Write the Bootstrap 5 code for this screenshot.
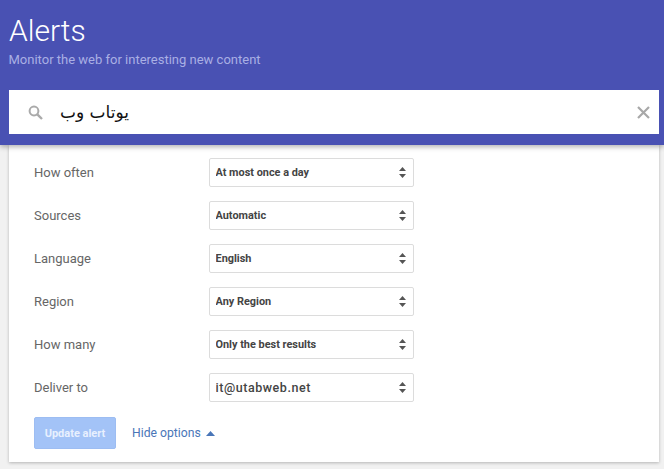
<!doctype html>
<html lang="en"><head><meta charset="utf-8"><title>Alerts</title>
<link href="https://cdn.jsdelivr.net/npm/bootstrap@5.3.0/dist/css/bootstrap.min.css" rel="stylesheet">
<style>
html,body{height:469px;overflow:hidden}
body{background:#f1f1f1;font-family:Roboto,"Liberation Sans",sans-serif;color:#666}
.hero{background:#4951b3;height:145px;padding:13px 5px 11px 9px;box-shadow:0 2px 5px rgba(0,0,0,.3);position:relative;z-index:2}
.hero-title{font-weight:300;font-size:30px;line-height:36px;color:#fff;margin:0}
.hero-sub{font-size:13px;line-height:16px;color:#a9afe4;margin:3px 0 22px -.5px}
.searchbar{background:#fff;height:44px;padding:0 9px 0 19px}
.ar-text{font-family:"DejaVu Sans",sans-serif;font-size:17px;color:#111;margin-left:17px;line-height:1}
.panel{background:#fff;margin:0 5px 0 9px;height:317px;padding:13px 25px 0;box-shadow:0 1px 3px rgba(0,0,0,.25)}
.opt-row{height:29px;margin-bottom:14px}
.opt-label{width:175px;font-size:13px;color:#666}
.opt-select.form-select{width:205px;height:29px;padding:2px 24px 0 5.500px;font-size:10.9px;font-weight:700;color:#444;border:1px solid #dcdcdc;border-radius:2px;background-position:right 6px center;background-size:9px 13px;box-shadow:none;font-family:Roboto,sans-serif;background-image:url("data:image/svg+xml,%3Csvg xmlns='http://www.w3.org/2000/svg' viewBox='0 0 9 13'%3E%3Cpath fill='%23555' d='M4.5 1 8 5H1zM1 8h7l-3.500 4z'/%3E%3C/svg%3E")}
.opt-select.mail{font-size:12.5px;letter-spacing:.55px;font-weight:500;padding-top:1px}
.btn-update.btn{background:#a3c3f7;border:1px solid #9dbdf2;color:#e8f0fe;font-size:11px;font-weight:700;width:82px;height:32px;padding:2px 0 0;border-radius:2px;opacity:1}
.hide-link{font-size:12.2px;color:#4a76b8;text-decoration:none;margin-left:16px;padding-top:1px;gap:5px}
.footer-row{margin-top:15px}
</style></head>
<body>
<header class="hero">
  <h1 class="hero-title">Alerts</h1>
  <p class="hero-sub">Monitor the web for interesting new content</p>
  <div class="searchbar d-flex align-items-center">
    <svg width="15" height="15" viewBox="0 0 15 15" fill="none" stroke="#aaa" stroke-width="2"><circle cx="6" cy="6" r="4.4"/><path d="M9.3 9.3 14 14" stroke-width="2.4"/></svg>
    <span class="ar-text" lang="fa" dir="rtl">یوتاب وب</span>
    <svg class="ms-auto" width="13" height="13" viewBox="0 0 13 13" stroke="#a8a8a8" stroke-width="2.2"><path d="M1 1 12 12M12 1 1 12"/></svg>
  </div>
</header>
<main class="panel">
  <div class="opt-row d-flex align-items-center"><label class="opt-label">How often</label><select class="form-select opt-select"><option>At most once a day</option></select></div>
  <div class="opt-row d-flex align-items-center"><label class="opt-label">Sources</label><select class="form-select opt-select"><option>Automatic</option></select></div>
  <div class="opt-row d-flex align-items-center"><label class="opt-label">Language</label><select class="form-select opt-select"><option>English</option></select></div>
  <div class="opt-row d-flex align-items-center"><label class="opt-label">Region</label><select class="form-select opt-select"><option>Any Region</option></select></div>
  <div class="opt-row d-flex align-items-center"><label class="opt-label">How many</label><select class="form-select opt-select"><option>Only the best results</option></select></div>
  <div class="opt-row d-flex align-items-center"><label class="opt-label">Deliver to</label><select class="form-select opt-select mail"><option>it@utabweb.net</option></select></div>
  <div class="footer-row d-flex align-items-center">
    <button class="btn btn-update" type="button">Update alert</button>
    <a class="hide-link d-flex align-items-center" href="#">Hide options <svg width="9" height="5" viewBox="0 0 9 5"><path fill="#4a76b8" d="M4.5 0 9 5H0z"/></svg></a>
  </div>
</main>
<script src="https://cdn.jsdelivr.net/npm/bootstrap@5.3.0/dist/js/bootstrap.bundle.min.js"></script>
</body></html>
